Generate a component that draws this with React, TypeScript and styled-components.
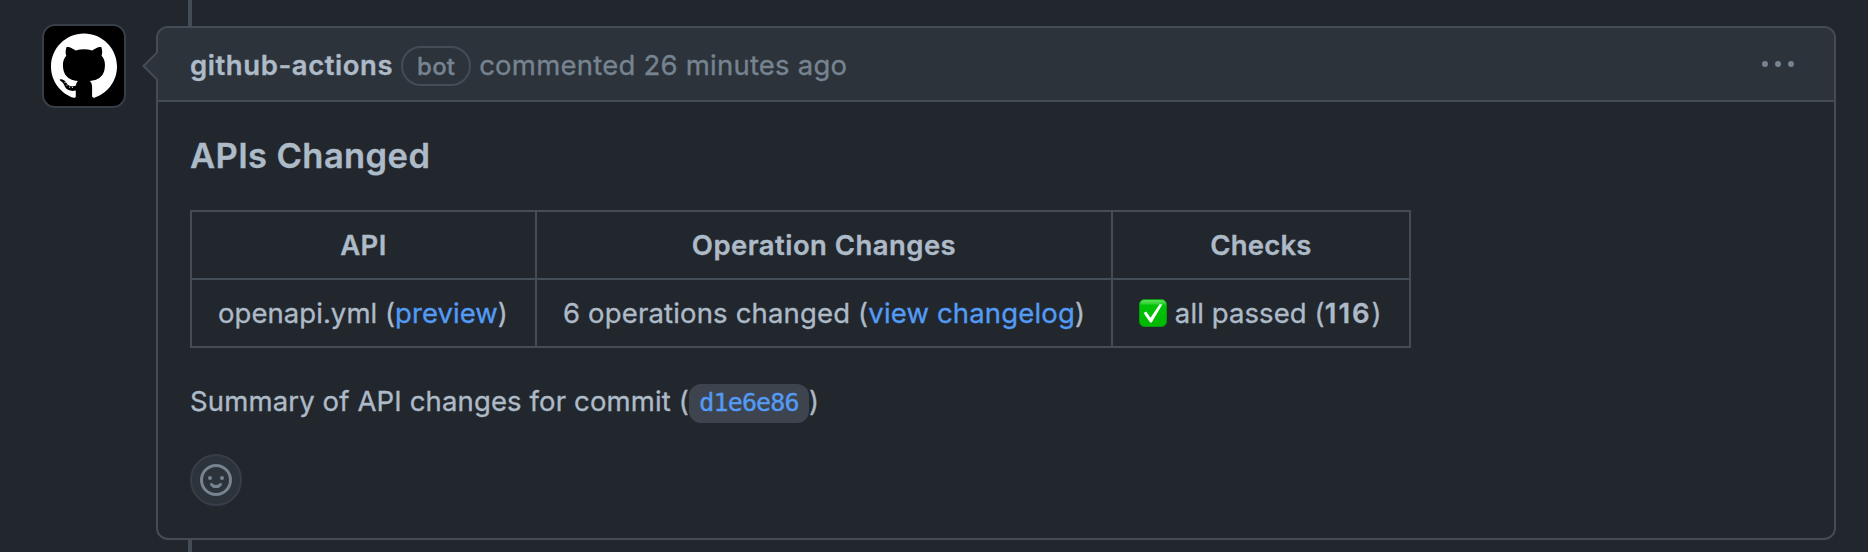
import React from 'react';
import styled, { createGlobalStyle } from 'styled-components';

const color = {
  canvas: '#22272e',
  subtle: '#2d333b',
  border: '#444c56',
  borderMuted: '#373e47',
  text: '#adbac7',
  muted: '#768390',
  link: '#539bf5',
  chip: '#3e444d',
};

const GlobalStyle = createGlobalStyle`
  * { box-sizing: border-box; }
  body {
    margin: 0;
    background: ${color.canvas};
    color: ${color.text};
    font-family: Inter, "Liberation Sans", sans-serif;
    font-size: 27.5px;
    line-height: 42px;
    -webkit-font-smoothing: antialiased;
    -webkit-text-stroke-width: 0.35px;
  }
`;

const TimelineItem = styled.div`
  position: relative;
  display: flex;
  align-items: flex-start;
  height: 552px;
  padding: 24px 32px 0 42px;
  overflow: hidden;

  &::before {
    content: '';
    position: absolute;
    top: 0;
    bottom: 0;
    left: 188px;
    width: 4px;
    background: ${color.border};
  }
`;

const Avatar = styled.div`
  flex: none;
  width: 84px;
  height: 84px;
  margin-right: 30px;
  border: 2px solid ${color.borderMuted};
  border-radius: 13px;
  background: #000;
  overflow: hidden;

  svg {
    display: block;
    margin: 7px;
  }
`;

const CommentCard = styled.article`
  position: relative;
  flex: 1;
  height: 514px;
  margin-top: 2px;
  border: 2px solid ${color.border};
  border-radius: 12px;
  background: ${color.canvas};
`;

const Caret = styled.svg`
  position: absolute;
  top: 24px;
  left: -16px;
  display: block;
`;

const CommentHeader = styled.header`
  display: flex;
  align-items: center;
  height: 74px;
  padding: 2px 40px 0 32px;
  border-bottom: 2px solid ${color.border};
  border-radius: 10px 10px 0 0;
  background: ${color.subtle};
  color: ${color.muted};
  letter-spacing: 0.23px;
`;

const Author = styled.strong`
  color: ${color.text};
  font-weight: 600;
  letter-spacing: 0.57px;
`;

const BotLabel = styled.span`
  display: flex;
  align-items: center;
  justify-content: center;
  width: 70px;
  height: 40px;
  margin: 2px 8px 0;
  padding-top: 1px;
  border: 2px solid ${color.border};
  border-radius: 20px;
  font-size: 24px;
  font-weight: 500;
`;

const MenuButton = styled.button`
  display: flex;
  margin: 0 0 2px auto;
  padding: 0;
  border: 0;
  background: none;
  color: ${color.muted};
`;

const CommentBody = styled.div`
  display: flex;
  flex-direction: column;
  align-items: flex-start;
  padding: 32px;
`;

const Title = styled.h3`
  margin: 0 0 32px;
  font-size: 34.5px;
  font-weight: 600;
  line-height: 44px;
  letter-spacing: 0.4px;
`;

const ChangesTable = styled.table`
  width: 1221px;
  table-layout: fixed;
  border-collapse: collapse;
`;

const Column = styled.col<{ $width: number }>`
  width: ${(p) => p.$width}px;
`;

const HeadCell = styled.th<{ $spacing?: number }>`
  height: 68px;
  padding: 12px 25px;
  border: 2px solid ${color.border};
  font-weight: 600;
  letter-spacing: ${(p) => p.$spacing ?? 0.45}px;
  white-space: nowrap;
`;

const Cell = styled.td<{ $spacing: number }>`
  height: 68px;
  padding: 12px 0 12px 26px;
  border: 2px solid ${color.border};
  letter-spacing: ${(p) => p.$spacing}px;
  white-space: nowrap;
`;

const CheckCount = styled.b`
  font-weight: 600;
  letter-spacing: 2px;
`;

const Link = styled.a`
  color: ${color.link};
  text-decoration: none;
`;

const CheckMark = styled.svg`
  display: inline-block;
  vertical-align: -4px;
`;

const Summary = styled.p`
  display: flex;
  align-items: center;
  height: 42px;
  margin: 32px 0;
  letter-spacing: 0.14px;
`;

const CommitHash = styled.code`
  display: flex;
  align-items: center;
  justify-content: center;
  width: 120px;
  height: 39px;
  margin-top: 4px;
  border-radius: 12px;
  background: ${color.chip};
  color: ${color.link};
  font-family: "DejaVu Sans Mono", monospace;
  font-size: 25px;
  letter-spacing: -0.85px;
`;

const ReactionButton = styled.button`
  display: flex;
  align-items: center;
  justify-content: center;
  width: 52px;
  height: 52px;
  padding: 0;
  border: 2px solid ${color.borderMuted};
  border-radius: 50%;
  background: ${color.subtle};
  color: ${color.muted};
`;

const OctocatMark = () => (
  <svg width="66" height="66" viewBox="0 0.15 24 24">
    <path
      fill="#fff"
      d="M12 .297c-6.63 0-12 5.373-12 12 0 5.303 3.438 9.8 8.205 11.385.6.113.82-.258.82-.577 0-.285-.01-1.04-.015-2.04-3.338.724-4.042-1.61-4.042-1.61C4.422 18.07 3.633 17.7 3.633 17.7c-1.087-.744.084-.729.084-.729 1.205.084 1.838 1.236 1.838 1.236 1.07 1.835 2.809 1.305 3.495.998.108-.776.417-1.305.76-1.605-2.665-.3-5.466-1.332-5.466-5.93 0-1.31.465-2.38 1.235-3.22-.135-.303-.54-1.523.105-3.176 0 0 1.005-.322 3.3 1.23.96-.267 1.98-.399 3-.405 1.02.006 2.04.138 3 .405 2.28-1.552 3.285-1.23 3.285-1.23.645 1.653.24 2.873.12 3.176.765.84 1.23 1.91 1.23 3.22 0 4.61-2.805 5.625-5.475 5.92.42.36.81 1.096.81 2.22 0 1.606-.015 2.896-.015 3.286 0 .315.21.69.825.57C20.565 22.092 24 17.592 24 12.297c0-6.627-5.373-12-12-12"
    />
    <g fill="#fff">
      <circle cx="5.1" cy="18.1" r=".22" />
      <circle cx="5.8" cy="19.1" r=".22" />
      <circle cx="6.8" cy="19.8" r=".22" />
      <circle cx="7.8" cy="19.9" r=".22" />
    </g>
  </svg>
);

const KebabIcon = () => (
  <svg width="32" height="32" viewBox="0 0 16 16" fill="currentColor">
    <circle cx="1.5" cy="8" r="1.5" />
    <circle cx="8" cy="8" r="1.5" />
    <circle cx="14.5" cy="8" r="1.5" />
  </svg>
);

const SmileyIcon = () => (
  <svg width="32" height="32" viewBox="0 0 16 16" fill="none" stroke="currentColor" strokeWidth="1.5">
    <circle cx="8" cy="8" r="7.25" />
    <path d="M5.75 10.25c.3.4 1 1.05 2.25 1.05s1.95-.65 2.25-1.05" strokeLinecap="round" />
    <g fill="currentColor" stroke="none">
      <circle cx="5" cy="7" r="1" />
      <circle cx="11" cy="7" r="1" />
    </g>
  </svg>
);

const PassedIcon = () => (
  <CheckMark width="28" height="28" viewBox="0 0 28 28" role="img" aria-label="passed">
    <defs>
      <linearGradient id="passed-fill" x1="0" y1="0" x2="0" y2="1">
        <stop offset="0" stopColor="#5fe35f" />
        <stop offset="0.14" stopColor="#3ad43c" />
        <stop offset="0.22" stopColor="#00c308" />
        <stop offset="1" stopColor="#00b800" />
      </linearGradient>
    </defs>
    <rect x="0.5" y="0.5" width="27" height="27" rx="5" fill="url(#passed-fill)" stroke="#079a0c" />
    <path d="M4.6 14.1l2.6-1.5 4.3 6.2L20.6 5.2l2.7.4-10.6 18h-1.6z" fill="#fff" />
  </CheckMark>
);

export default function App() {
  return (
    <>
      <GlobalStyle />
      <TimelineItem>
        <Avatar>
          <OctocatMark />
        </Avatar>
        <CommentCard>
          <CommentHeader>
            <Author>github-actions</Author>
            <BotLabel>bot</BotLabel>
            <span>commented 26 minutes ago</span>
            <MenuButton aria-label="Show options">
              <KebabIcon />
            </MenuButton>
          </CommentHeader>
          <Caret width="18" height="28" viewBox="0 0 18 28">
            <path d="M18 0H15.5L2 14L15.5 28H18Z" fill={color.subtle} />
            <path d="M15.3 0.3L1.5 14L15.3 27.7" fill="none" stroke={color.border} strokeWidth="2" />
          </Caret>
          <CommentBody>
            <Title>APIs Changed</Title>
            <ChangesTable>
              <colgroup>
                <Column $width={345} />
                <Column $width={576} />
                <Column $width={298} />
              </colgroup>
              <thead>
                <tr>
                  <HeadCell>API</HeadCell>
                  <HeadCell>Operation Changes</HeadCell>
                  <HeadCell $spacing={0.2}>Checks</HeadCell>
                </tr>
              </thead>
              <tbody>
                <tr>
                  <Cell $spacing={0.05}>
                    openapi.yml (<Link>preview</Link>)
                  </Cell>
                  <Cell $spacing={0.16}>
                    6 operations changed (<Link>view changelog</Link>)
                  </Cell>
                  <Cell $spacing={0.1}>
                    <PassedIcon /> all passed (<CheckCount>116</CheckCount>)
                  </Cell>
                </tr>
              </tbody>
            </ChangesTable>
            <Summary>
              Summary of API changes for commit (<CommitHash>d1e6e86</CommitHash>)
            </Summary>
            <ReactionButton aria-label="Add reaction">
              <SmileyIcon />
            </ReactionButton>
          </CommentBody>
        </CommentCard>
      </TimelineItem>
    </>
  );
}
